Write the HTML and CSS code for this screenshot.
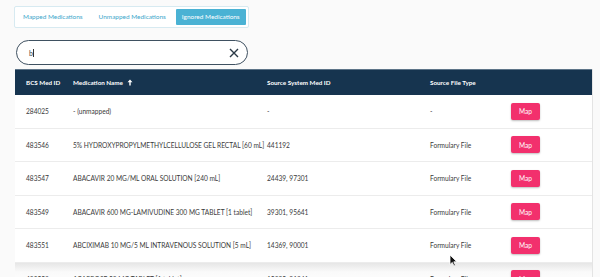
FILE: index.html
```html
<!DOCTYPE html>
<html lang="en">
<head>
<meta charset="UTF-8">
<meta name="viewport" content="width=device-width, initial-scale=1.0">
<title>Medications</title>
<link rel="stylesheet" href="styles.css">
</head>
<body>
<div class="page">
    <div class="tabs">
        <span class="tab">Mapped Medications</span>
        <span class="tab">Unmapped Medications</span>
        <span class="tab active">Ignored Medications</span>
    </div>

    <div class="search">
        <span class="query">b<span class="caret"></span></span>
        <svg class="clear" width="10" height="10" viewBox="0 0 10 10">
            <path d="M1 1 L9 9 M9 1 L1 9" stroke="#2b3a47" stroke-width="1.4" fill="none"/>
        </svg>
    </div>

    <div class="table">
        <div class="row head">
            <div class="cell">BCS Med ID</div>
            <div class="cell">Medication Name
                <svg class="sort" width="6" height="7" viewBox="0 0 6 7">
                    <path d="M3 0.5 L0.5 3.2 H2.3 V6.5 H3.7 V3.2 H5.5 Z" fill="#fff"/>
                </svg>
            </div>
            <div class="cell">Source System Med ID</div>
            <div class="cell">Source File Type</div>
            <div class="cell"></div>
        </div>
        <div class="row">
            <div class="cell">284025</div>
            <div class="cell">- (unmapped)</div>
            <div class="cell">-</div>
            <div class="cell">-</div>
            <div class="cell"><button class="map">Map</button></div>
        </div>
        <div class="row">
            <div class="cell">483546</div>
            <div class="cell">5% HYDROXYPROPYLMETHYLCELLULOSE GEL RECTAL [60 mL]</div>
            <div class="cell">441192</div>
            <div class="cell">Formulary File</div>
            <div class="cell"><button class="map">Map</button></div>
        </div>
        <div class="row">
            <div class="cell">483547</div>
            <div class="cell">ABACAVIR 20 MG/ML ORAL SOLUTION [240 mL]</div>
            <div class="cell">24439, 97301</div>
            <div class="cell">Formulary File</div>
            <div class="cell"><button class="map">Map</button></div>
        </div>
        <div class="row">
            <div class="cell">483549</div>
            <div class="cell">ABACAVIR 600 MG-LAMIVUDINE 300 MG TABLET [1 tablet]</div>
            <div class="cell">39301, 95641</div>
            <div class="cell">Formulary File</div>
            <div class="cell"><button class="map">Map</button></div>
        </div>
        <div class="row">
            <div class="cell">483551</div>
            <div class="cell">ABCIXIMAB 10 MG/5 ML INTRAVENOUS SOLUTION [5 mL]</div>
            <div class="cell">14369, 90001</div>
            <div class="cell">Formulary File</div>
            <div class="cell"><button class="map">Map</button></div>
        </div>
        <div class="row raised">
            <div class="cell">483552</div>
            <div class="cell">ACARBOSE 50 MG TABLET [1 tablet]</div>
            <div class="cell">15895, 91241</div>
            <div class="cell">Formulary File</div>
            <div class="cell"><button class="map">Map</button></div>
        </div>
    </div>
</div>

<!-- mouse pointer caught in the capture -->
<svg class="pointer" width="9" height="13" viewBox="0 0 9 13">
    <path d="M1 1 L1 10.5 L3.3 8.4 L5 12 L6.4 11.3 L4.8 7.8 L7.8 7.8 Z" fill="#111" stroke="#fff" stroke-width="0.8"/>
</svg>
</body>
</html>
```

FILE: styles.css
```css
/* Basic styling */
body {
    margin: 0;
    background-color: #fafafa;
    font-family: Lato, "Open Sans", Arial, sans-serif;
    color: #3a3a3a;
    overflow: hidden;
}
.page {
    padding: 3px 8px 0 14px;
}
.tabs {
    display: inline-flex;
    align-items: center;
    height: 16px;
    padding: 2px;
    border: 1px solid #d7eaf1;
    border-radius: 2px;
    background-color: #fff;
}
.tab {
    padding: 0 6px;
    font-size: 6.45px;
    line-height: 16px;
    color: #3ea7cb;
}
.tab + .tab {
    margin-left: 4px;
}
.tab.active {
    background-color: #4ab2d4;
    color: #fff;
    border-radius: 1px;
}
.search {
    display: flex;
    align-items: center;
    justify-content: space-between;
    width: 232px;
    height: 25px;
    margin: 12px 0 0 2px;
    padding: 0 8px 0 12px;
    box-sizing: border-box;
    border: 1px solid #3f5161;
    border-radius: 13px;
    background-color: #fff;
    font-size: 7px;
}
.caret {
    display: inline-block;
    width: 1px;
    height: 8px;
    margin-left: 0.5px;
    vertical-align: -1px;
    background-color: #333;
}
.table {
    margin: 4px 0 0 1px;
    width: 577px;
    background-color: #fff;
    border-right: 1px solid #e4e4e4;
}
.row {
    display: grid;
    grid-template-columns: 47px 194px 163px 81px 1fr;
    align-items: center;
    height: 33.5px;
    box-sizing: border-box;
    border-bottom: 1px solid #ececec;
    font-size: 6.6px;
}
.row.head {
    height: 26px;
    background-color: #16344f;
    border-top: 1px solid #5d7488;
    border-bottom: none;
    color: #fff;
    font-weight: bold;
    font-size: 6.3px;
}
.cell {
    padding-left: 11px;
    white-space: nowrap;
}
.sort {
    margin-left: 3px;
    vertical-align: -1px;
}
.map {
    width: 29px;
    height: 17px;
    border: none;
    border-radius: 2px;
    background-color: #f2306d;
    box-shadow: 0 1px 2px rgba(0, 0, 0, 0.25);
    color: #fff;
    font-family: inherit;
    font-size: 6.6px;
    padding: 0;
}
.row.raised {
    background: linear-gradient(#e6e6e6, #fafafa 9px, #fff);
}
.pointer {
    position: absolute;
    left: 449px;
    top: 254px;
}
```
